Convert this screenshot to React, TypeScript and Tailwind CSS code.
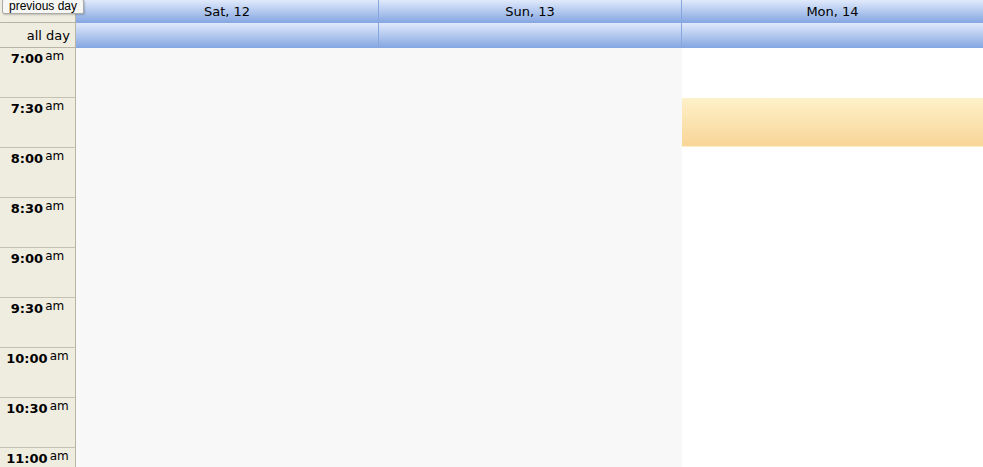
const days = [
  { label: "Sat, 12", width: "w-[302px]", body: "bg-[#f8f8f8]" },
  { label: "Sun, 13", width: "w-[303px]", body: "bg-[#f8f8f8]" },
  { label: "Mon, 14", width: "flex-1", body: "bg-white" },
]

const slots = ["7:00", "7:30", "8:00", "8:30", "9:00", "9:30", "10:00", "10:30", "11:00"]

const headGrad = "bg-gradient-to-b from-[#e1eafb] to-[#84a6e1]"

export default function App() {
  return (
    <div className="relative w-[983px] h-[467px] overflow-hidden bg-white text-black font-['DejaVu_Sans',sans-serif]">
      {/* day header */}
      <div className="flex h-[23px]">
        <div className="w-[76px] shrink-0 bg-[#efece0] border-r border-b border-[#b8b5a6]" />
        {days.map((d, i) => (
          <div
            key={d.label}
            className={`${d.width} shrink-0 ${headGrad} flex items-center justify-center text-[13px] leading-none pb-[1px] ${i > 0 ? "border-l border-[#86a6de]" : ""}`}
          >
            {d.label}
          </div>
        ))}
      </div>

      {/* all day row */}
      <div className="flex h-[25px]">
        <div className="w-[76px] shrink-0 bg-[#efece0] border-r border-b border-[#b8b5a6] flex items-center justify-end pr-[5px] text-[13px] leading-none">
          all day
        </div>
        {days.map((d, i) => (
          <div key={d.label} className={`${d.width} shrink-0 ${headGrad} ${i > 0 ? "border-l border-[#86a6de]" : ""}`} />
        ))}
      </div>

      {/* time grid */}
      <div className="flex">
        <div className="w-[76px] shrink-0 bg-[#efece0] border-r border-[#b8b5a6]">
          {slots.map((t) => (
            <div key={t} className="h-[50px] border-b border-[#c4c1b2] flex justify-center pt-[2px]">
              <span className="inline-flex items-start">
                <span className="text-[13px] font-bold leading-[18px]">{t}</span>
                <span className="text-[12px] leading-[12px] ml-[2px]">am</span>
              </span>
            </div>
          ))}
        </div>
        {days.map((d, i) => (
          <div key={d.label} className={`${d.width} shrink-0 h-[450px] ${d.body} ${i > 0 ? "border-l border-[#f8f8f8]" : ""}`}>
            {i === 2 && (
              <div className="mt-[50px] h-[49px] bg-gradient-to-b from-[#fef1c9] to-[#f8d597] border-b border-[#fdefcb]" />
            )}
          </div>
        ))}
      </div>

      {/* hover tip over the prev button */}
      <div className="absolute left-[2px] top-[-1px] h-[15px] px-[6px] bg-[#f6f6f4] border border-[#a9a9a9] rounded-[2px] shadow-[1px_1px_2px_rgba(0,0,0,0.2)] text-[12px] leading-[13px] font-['Liberation_Sans',sans-serif]">
        previous day
      </div>
    </div>
  )
}
